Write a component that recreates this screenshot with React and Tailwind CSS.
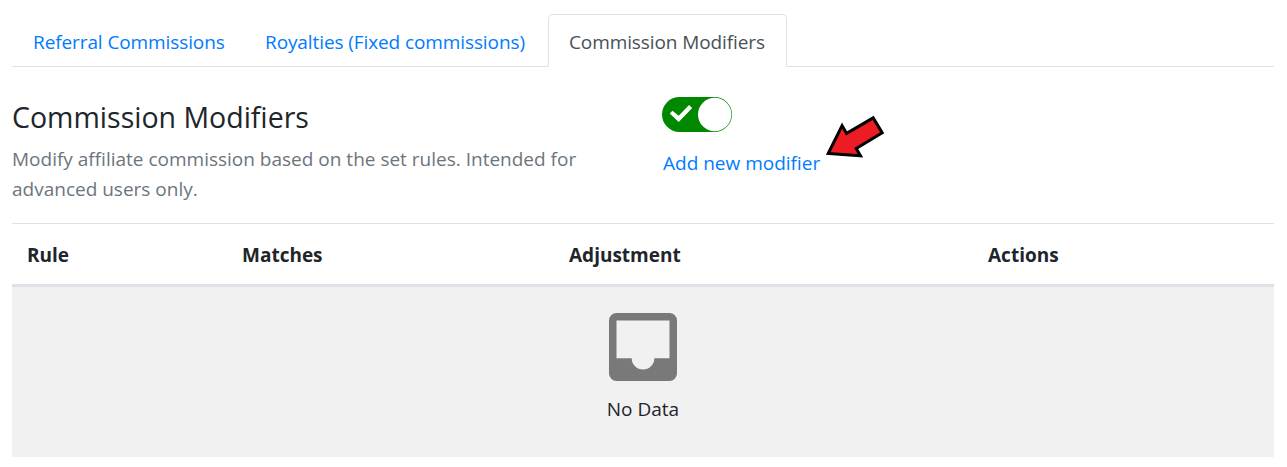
const tabs = [
  { label: "Referral Commissions", box: "w-[232px]", text: "tracking-[-0.1px]" },
  { label: "Royalties (Fixed commissions)", box: "w-[304px]", text: "tracking-[-0.1px]" },
  { label: "Commission Modifiers", box: "w-[239px]", text: "tracking-[-0.1px]", active: true },
];

const columns = [
  { label: "Rule", box: "w-[215px]" },
  { label: "Matches", box: "w-[327px]" },
  { label: "Adjustment", box: "w-[419px]" },
  { label: "Actions", box: "flex-1" },
];

function Toggle() {
  return (
    <button type="button" role="switch" aria-checked="true" aria-label="Commission Modifiers" className="block h-[35px] w-[70px]">
      <svg width="70" height="35" viewBox="0 0 70 35">
        <rect width="70" height="35" rx="17.5" fill="#008800" />
        <circle cx="52.7" cy="17.5" r="16.7" fill="#fff" />
        <path d="M7.8 16.4 10.4 13.7 16.7 18.7 27 8 30.2 11 16.7 24.9Z" fill="#fff" />
      </svg>
    </button>
  );
}

function Arrow() {
  return (
    <svg className="absolute left-[162px] top-[15px]" width="64" height="50" viewBox="0 0 64 50">
      <path d="M4.2 41.5 18.1 13.6 22.6 21.4 49.2 5.9 58.2 20.8 32.2 36.4 36.5 43.7Z" fill="#ed1c24" stroke="#000" strokeWidth="3" />
    </svg>
  );
}

export default function App() {
  return (
    <div className="h-[467px] bg-white pl-3 pr-[13px] pt-[14px] font-['Open_Sans','Noto_Sans',sans-serif] text-[19px] leading-[30px] text-[#212529]">
      <nav className="flex h-[53px] w-full border-b border-[#dee2e6]">
        {tabs.map((t) => (
          <a
            key={t.label}
            className={
              t.active
                ? `${t.box} h-[53px] shrink-0 whitespace-nowrap rounded-t-[5px] border border-[#dee2e6] border-b-white bg-white pl-5 pt-[12px] text-[#495057]`
                : `${t.box} h-[52px] shrink-0 whitespace-nowrap pl-[21px] pt-[13px] text-[#007bff]`
            }
          >
            <span className={t.text}>{t.label}</span>
          </a>
        ))}
      </nav>
      <section className="flex h-[156px] pt-[30px]">
        <div className="w-[650px]">
          <h1 className="mt-[2px] h-[36px] whitespace-nowrap text-[28.5px] leading-[36px]">Commission Modifiers</h1>
          <p className="mt-[9px] text-[#6c757d]">
            <span className="block whitespace-nowrap">Modify affiliate commission based on the set rules. Intended for</span>
            <span className="block whitespace-nowrap">advanced users only.</span>
          </p>
        </div>
        <div className="relative">
          <Toggle />
          <a className="mt-[16px] block whitespace-nowrap pl-px text-[#007bff]">Add new modifier</a>
          <Arrow />
        </div>
      </section>
      <div className="flex h-[64px] border-b-[3px] border-t border-[#dee2e6] pl-[15px] pt-4 font-bold">
        {columns.map((c) => (
          <div key={c.label} className={c.box}>{c.label}</div>
        ))}
      </div>
      <div className="flex h-[170px] flex-col items-center bg-[#f1f1f1] pt-[26px]">
        <svg width="68" height="68" viewBox="0 0 68 68">
          <path
            fillRule="evenodd"
            d="M7.5 0H60.5A7.5 7.5 0 0 1 68 7.5V60.5A7.5 7.5 0 0 1 60.5 68H7.5A7.5 7.5 0 0 1 0 60.5V7.5A7.5 7.5 0 0 1 7.5 0ZM7.5 7.5V45.3H22.7A11.3 11.3 0 0 0 45.3 45.3H60.5V7.5Z"
            fill="#797979"
          />
        </svg>
        <div className="mt-[13px]">No Data</div>
      </div>
    </div>
  );
}
